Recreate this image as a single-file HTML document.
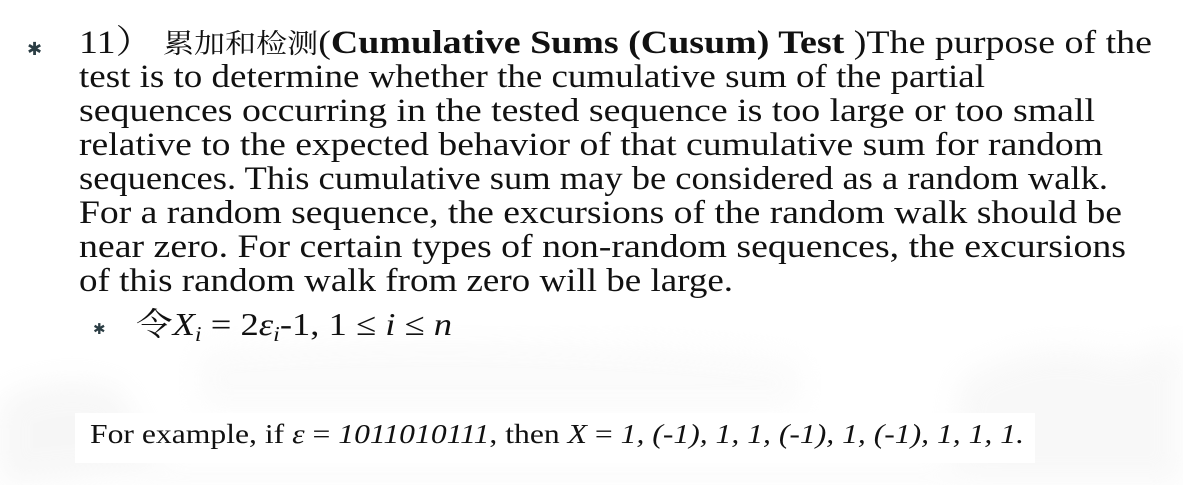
<!DOCTYPE html>
<html><head><meta charset="utf-8"><style>
html,body{margin:0;padding:0;background:#fff;width:1183px;height:485px;overflow:hidden}
svg{display:block}
text{font-family:"Liberation Serif","Noto Serif CJK SC",serif;fill:#111}
</style></head><body>
<svg width="1183" height="485" viewBox="0 0 1183 485" xmlns="http://www.w3.org/2000/svg">
<defs><filter id="b"><feGaussianBlur stdDeviation="14"/></filter></defs>
<g filter="url(#b)" opacity="0.35">
<path d="M0 400 Q60 370 120 390 L160 470 L0 485Z" fill="#e8e8e8"/>
<path d="M960 380 Q1050 330 1120 360 L1183 340 L1183 485 L950 485Z" fill="#ececec"/>
<path d="M200 350 Q500 330 800 360 L800 410 L200 410Z" fill="#f3f3f3"/>
<path d="M150 470 L1000 470 L1000 485 L150 485Z" fill="#f0f0f0"/>
</g>
<rect x="75" y="413" width="960" height="50" fill="#fff"/>
<text x="27" y="55" style="fill:#2b3d44;font-family:'DejaVu Sans',sans-serif" font-size="18">✱</text>
<text x="93" y="334" style="fill:#2b3d44;font-family:'DejaVu Sans',sans-serif" font-size="15">✱</text>
<g font-size="33">
<text x="79" y="53" textLength="1073" lengthAdjust="spacingAndGlyphs">11） <tspan font-size="27">累加和检测</tspan>(<tspan font-weight="bold">Cumulative Sums (Cusum) Test </tspan>)The purpose of the</text>
<text x="79" y="87" textLength="906" lengthAdjust="spacingAndGlyphs">test is to determine whether the cumulative sum of the partial</text>
<text x="79" y="121" textLength="1016" lengthAdjust="spacingAndGlyphs">sequences occurring in the tested sequence is too large or too small</text>
<text x="79" y="155" textLength="1024" lengthAdjust="spacingAndGlyphs">relative to the expected behavior of that cumulative sum for random</text>
<text x="79" y="189" textLength="1029" lengthAdjust="spacingAndGlyphs">sequences. This cumulative sum may be considered as a random walk.</text>
<text x="79" y="223" textLength="1043" lengthAdjust="spacingAndGlyphs">For a random sequence, the excursions of the random walk should be</text>
<text x="79" y="257" textLength="1047" lengthAdjust="spacingAndGlyphs">near zero. For certain types of non-random sequences, the excursions</text>
<text x="79" y="291" textLength="654" lengthAdjust="spacingAndGlyphs">of this random walk from zero will be large.</text>
</g>
<text x="136" y="335" font-size="32" textLength="316" lengthAdjust="spacingAndGlyphs">令<tspan font-style="italic">X</tspan><tspan font-style="italic" font-size="21" dy="6">i</tspan><tspan dy="-6"> = 2</tspan><tspan font-style="italic">ε</tspan><tspan font-style="italic" font-size="21" dy="6">i</tspan><tspan dy="-6">-1, 1 ≤ </tspan><tspan font-style="italic">i</tspan> ≤ <tspan font-style="italic">n</tspan></text>
<text x="90" y="443" font-size="27" textLength="934" lengthAdjust="spacingAndGlyphs">For example, if <tspan font-style="italic">ε</tspan>  = <tspan font-style="italic">1011010111</tspan>, then <tspan font-style="italic">X</tspan> = <tspan font-style="italic">1, (-1), 1, 1, (-1), 1, (-1), 1, 1, 1.</tspan></text>
</svg>
</body></html>
